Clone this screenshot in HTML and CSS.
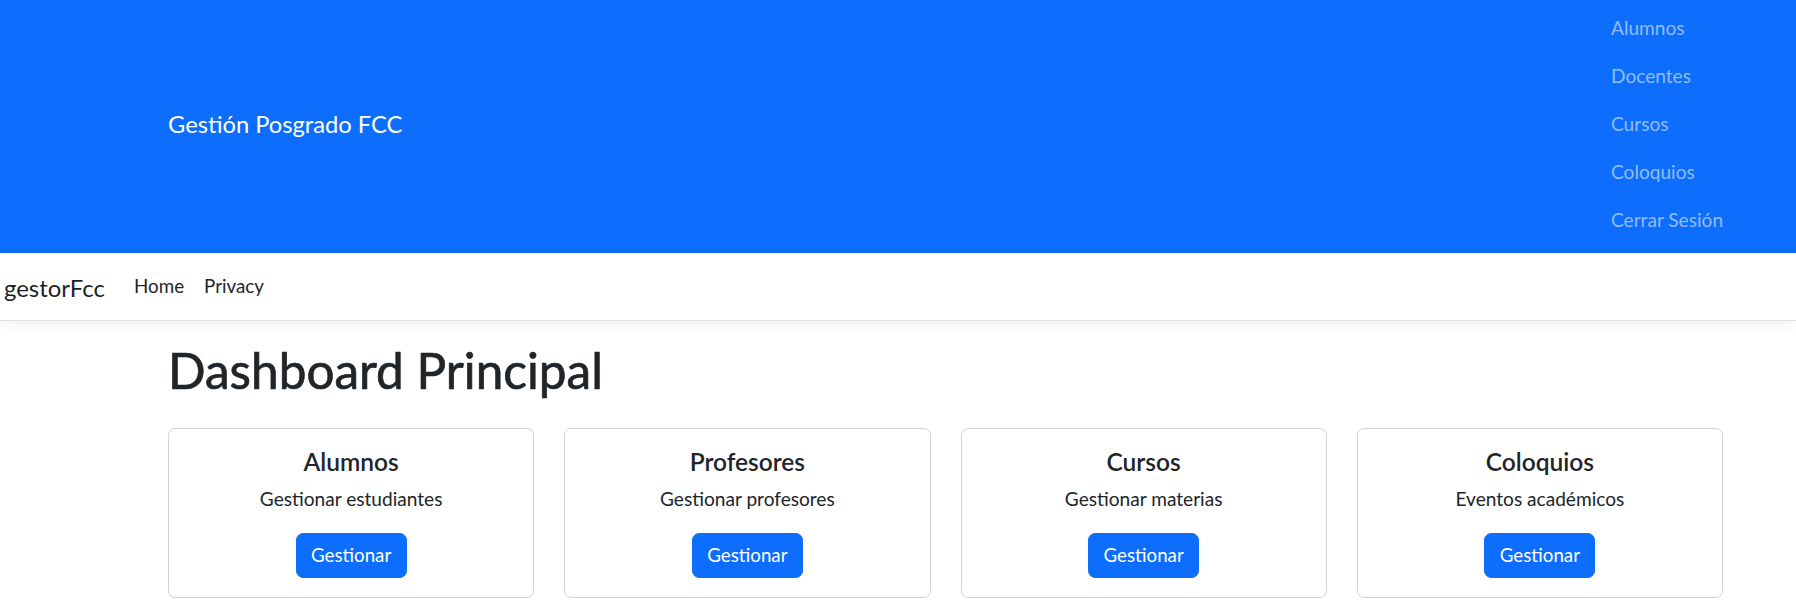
FILE: index.html
```html
<!DOCTYPE html>
<html lang="es">
<head>
<meta charset="utf-8">
<title>Dashboard Principal - gestorFcc</title>
<link rel="stylesheet" href="styles.css">
</head>
<body>
<header class="topbar">
  <a class="topbar-brand" href="#">Gestión Posgrado FCC</a>
  <ul class="topbar-nav">
    <li><a class="topbar-link" href="#">Alumnos</a></li>
    <li><a class="topbar-link" href="#">Docentes</a></li>
    <li><a class="topbar-link" href="#">Cursos</a></li>
    <li><a class="topbar-link" href="#">Coloquios</a></li>
    <li><a class="topbar-link" href="#">Cerrar Sesión</a></li>
  </ul>
</header>
<nav class="navbar">
  <a class="navbar-brand" href="#">gestorFcc</a>
  <ul class="navbar-nav">
    <li><a class="nav-link" href="#">Home</a></li>
    <li><a class="nav-link" href="#">Privacy</a></li>
  </ul>
</nav>
<main class="main">
  <h1 class="page-title">Dashboard Principal</h1>
  <div class="cards">
    <div class="card">
      <h5 class="card-title">Alumnos</h5>
      <p class="card-text">Gestionar estudiantes</p>
      <a class="btn" href="#">Gestionar</a>
    </div>
    <div class="card">
      <h5 class="card-title">Profesores</h5>
      <p class="card-text">Gestionar profesores</p>
      <a class="btn" href="#">Gestionar</a>
    </div>
    <div class="card">
      <h5 class="card-title">Cursos</h5>
      <p class="card-text">Gestionar materias</p>
      <a class="btn" href="#">Gestionar</a>
    </div>
    <div class="card">
      <h5 class="card-title">Coloquios</h5>
      <p class="card-text">Eventos académicos</p>
      <a class="btn" href="#">Gestionar</a>
    </div>
  </div>
</main>
</body>
</html>
```
FILE: styles.css
```css
* { box-sizing: border-box; }
html, body { margin: 0; padding: 0; }
body {
  font-family: "Lato", "Open Sans", sans-serif;
  color: #212529;
  background: #fff;
}
a { text-decoration: none; }
ul { list-style: none; margin: 0; padding: 0; }

/* Top blue bar */
.topbar {
  background: #0d6efd;
  height: 253px;
  display: flex;
  justify-content: space-between;
  align-items: center;
  padding: 4px 73px 9px 168px;
}
.topbar-brand {
  color: #fff;
  font-size: 23.7px;
  line-height: 28.8px;
}
.topbar-nav {
  display: flex;
  flex-direction: column;
  width: 112px;
}
.topbar-link {
  display: block;
  color: rgba(255, 255, 255, 0.55);
  font-size: 19.1px;
  line-height: 28.8px;
  padding: 9.6px 0;
  white-space: nowrap;
}

/* White navbar */
.navbar {
  height: 68px;
  display: flex;
  align-items: center;
  padding: 0 0 0 4px;
  background: #fff;
  border-bottom: 1px solid #dee2e6;
  box-shadow: 0 5px 14px rgba(0, 0, 0, 0.05);
}
.navbar-brand {
  color: rgba(0, 0, 0, 0.9);
  font-size: 23.9px;
  line-height: 36px;
  padding-top: 2px;
  margin-right: 19.2px;
}
.navbar-nav {
  display: flex;
}
.nav-link {
  display: block;
  color: #212529;
  font-size: 18.8px;
  line-height: 28.8px;
  padding: 9.6px 10px;
}

/* Main content */
.main {
  padding: 21px 73px 0 168px;
}
.page-title {
  margin: 0 0 28px;
  font-size: 49.5px;
  font-weight: 400;
  line-height: 57.6px;
  color: #212529;
  -webkit-text-stroke: 0.7px #212529;
}
.cards {
  display: grid;
  grid-template-columns: repeat(4, 1fr);
  column-gap: 30px;
}
.card {
  border: 1px solid rgba(0, 0, 0, 0.175);
  border-radius: 7.2px;
  padding: 19.2px;
  display: flex;
  flex-direction: column;
  align-items: center;
  text-align: center;
}
.card-title {
  margin: 0 0 8px;
  font-size: 24.5px;
  font-weight: 600;
  line-height: 28.8px;
}
.card-text {
  margin: 0 0 19.2px;
  font-size: 19.1px;
  line-height: 28.8px;
}
.btn {
  display: inline-block;
  background: #0d6efd;
  border: 1.2px solid #0d6efd;
  color: #fff;
  border-radius: 7.2px;
  font-size: 18.7px;
  line-height: 28.8px;
  padding: 7.2px 14.4px;
}
```
